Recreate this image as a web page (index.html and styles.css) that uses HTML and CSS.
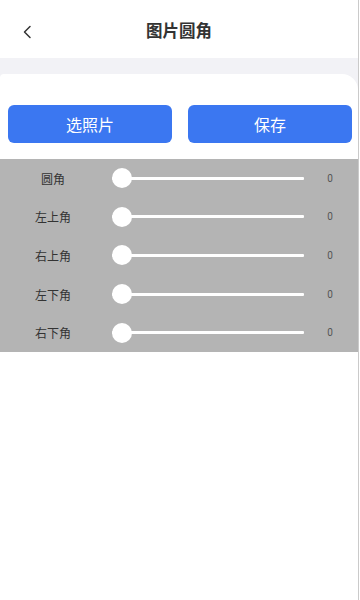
FILE: index.html
```html
<!DOCTYPE html>
<html lang="zh-CN">
<head>
<meta charset="utf-8">
<meta name="viewport" content="width=360">
<title>图片圆角</title>
<link rel="stylesheet" href="styles.css">
</head>
<body>
<div class="page">
  <header class="nav">
    <button class="back" aria-label="返回">
      <svg width="10" height="14" viewBox="0 0 10 14"><path d="M8 1.5 L2.5 7 L8 12.5" fill="none" stroke="#333" stroke-width="1.5" stroke-linecap="round" stroke-linejoin="round"/></svg>
    </button>
    <h1 class="title">图片圆角</h1>
  </header>
  <div class="band"></div>
  <main class="card">
    <div class="actions">
      <button class="btn">选照片</button>
      <button class="btn">保存</button>
    </div>
    <section class="panel">
      <div class="row"><span class="label">圆角</span><input class="slider" type="range" min="0" max="100" value="0"><span class="value">0</span></div>
      <div class="row"><span class="label">左上角</span><input class="slider" type="range" min="0" max="100" value="0"><span class="value">0</span></div>
      <div class="row"><span class="label">右上角</span><input class="slider" type="range" min="0" max="100" value="0"><span class="value">0</span></div>
      <div class="row"><span class="label">左下角</span><input class="slider" type="range" min="0" max="100" value="0"><span class="value">0</span></div>
      <div class="row"><span class="label">右下角</span><input class="slider" type="range" min="0" max="100" value="0"><span class="value">0</span></div>
    </section>
  </main>
</div>
</body>
</html>
```
FILE: styles.css
```css
* { box-sizing: border-box; }
html, body { margin: 0; padding: 0; background: #fff; }
body {
  width: 360px;
  height: 600px;
  overflow: hidden;
  font-family: "Noto Sans CJK SC", "Noto Sans", sans-serif;
}
.page {
  width: 359px;
  height: 600px;
  border-right: 1px solid #cacaca;
  background: #f2f2f6;
  display: flex;
  flex-direction: column;
}
.nav {
  height: 58px;
  background: #fff;
  display: flex;
  align-items: center;
  justify-content: center;
  position: relative;
}
.back {
  position: absolute;
  left: 19px;
  top: 24px;
  width: 16px;
  height: 16px;
  padding: 0;
  border: 0;
  background: none;
  display: flex;
  align-items: center;
  justify-content: center;
}
.title {
  margin: 0;
  font-size: 16.5px;
  font-weight: 700;
  color: #333;
  line-height: 1;
  padding-top: 3px;
  letter-spacing: 0;
}
.band { height: 16px; }
.card {
  flex: 1;
  background: #fff;
  border-radius: 4px 16px 0 0;
  padding-top: 31px;
}
.actions {
  display: flex;
  gap: 16px;
  padding: 0 6px 0 8px;
}
.btn {
  flex: 1;
  height: 38px;
  border: 0;
  border-radius: 6px;
  background: #3b77f1;
  color: #fff;
  font-family: inherit;
  font-size: 16px;
  padding: 0;
}
.panel {
  margin-top: 16px;
  background: #b4b4b4;
  padding: 0;
  display: flex;
  flex-direction: column;
}
.row {
  height: 38.6px;
  display: flex;
  align-items: center;
}
.label {
  width: 106px;
  text-align: center;
  font-size: 12px;
  color: #333;
}
.slider {
  -webkit-appearance: none;
  appearance: none;
  width: 192px;
  height: 20px;
  margin: 0 0 0 6px;
  background: transparent;
}
.slider::-webkit-slider-runnable-track {
  height: 3px;
  background: #fff;
  border-radius: 1px;
}
.slider::-webkit-slider-thumb {
  -webkit-appearance: none;
  appearance: none;
  width: 20px;
  height: 20px;
  margin-top: -8.5px;
  border-radius: 50%;
  background: #fff;
  border: 0;
}
.value {
  flex: 1;
  text-align: center;
  font-family: "Roboto", sans-serif;
  font-size: 10px;
  color: #555;
  padding-right: 2px;
}
```
